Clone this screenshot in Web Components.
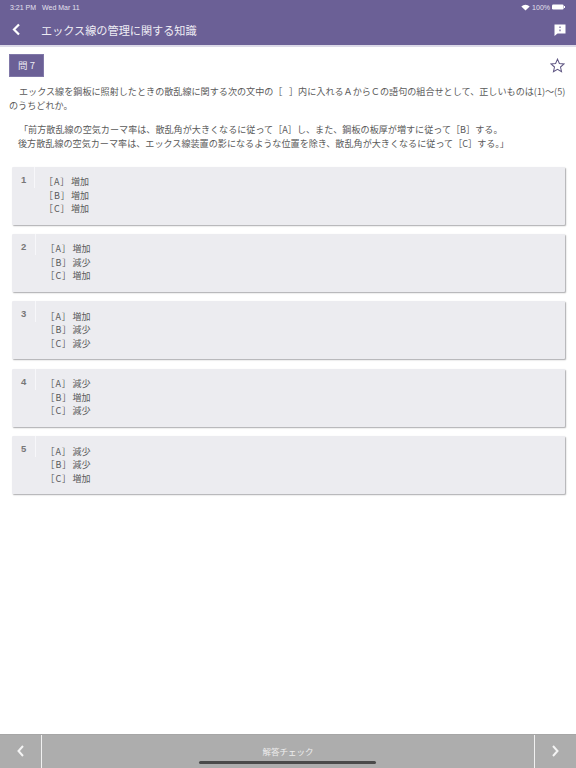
<!DOCTYPE html>
<html lang="ja">
<head>
<meta charset="utf-8">
<title>問7</title>
<style>
    html, body { margin: 0; height: 100%; background: #fff; }
    body { font-family: "Noto Sans CJK JP", "Liberation Sans", sans-serif; }
</style>
</head>
<body>
<quiz-screen>
    <quiz-header slot="header" title="エックス線の管理に関する知識"></quiz-header>
    <quiz-question number="問 7">
        <p class="lead">エックス線を鋼板に照射したときの散乱線に関する次の文中の［&ensp; ］内に入れるＡからＣの語句の組合せとして、正しいものは(1)～(5)のうちどれか。</p>
        <p class="quote">「前方散乱線の空気カーマ率は、散乱角が大きくなるに従って［A］し、また、鋼板の板厚が増すに従って［B］する。<br>後方散乱線の空気カーマ率は、エックス線装置の影になるような位置を除き、散乱角が大きくなるに従って［C］する。」</p>
    </quiz-question>
    <quiz-choice number="1" a="増加" b="増加" c="増加" narrow></quiz-choice>
    <quiz-choice number="2" a="増加" b="減少" c="増加"></quiz-choice>
    <quiz-choice number="3" a="増加" b="減少" c="減少"></quiz-choice>
    <quiz-choice number="4" a="減少" b="増加" c="減少"></quiz-choice>
    <quiz-choice number="5" a="減少" b="減少" c="増加"></quiz-choice>
    <quiz-footer slot="footer" label="解答チェック"></quiz-footer>
</quiz-screen>

<script>
class QuizScreen extends HTMLElement {
    constructor() {
        super();
        this.attachShadow({ mode: 'open' });
        this.shadowRoot.innerHTML = `
        <style>
            :host { display: flex; flex-direction: column; width: 576px; height: 768px; overflow: hidden; background: #fff; }
            main { flex: 1; display: flex; flex-direction: column; gap: 9.4px; padding: 0 11px 0 12px; }
        </style>
        <slot name="header"></slot>
        <main><slot></slot></main>
        <slot name="footer"></slot>`;
    }
}

class QuizHeader extends HTMLElement {
    constructor() {
        super();
        this.attachShadow({ mode: 'open' });
    }
    connectedCallback() {
        this.shadowRoot.innerHTML = `
        <style>
            :host { display: block; height: 47px; box-sizing: border-box; background: #6b6096; border-bottom: 2px solid #dcdae8; color: #fff; }
            .status { height: 14px; display: flex; align-items: center; padding: 0 11px 0 10px; font-size: 7px; color: #e4e1ee; gap: 6px; font-family: "Liberation Sans", sans-serif; }
            .right { margin-left: auto; display: flex; align-items: center; gap: 2px; }
            .bar { display: flex; align-items: center; height: 31px; padding: 0 10px 3px 12px; }
            .title { margin-left: 20px; font-size: 11.15px; color: #eeecf4; }
            .note { margin-left: auto; }
            svg { display: block; }
        </style>
        <div class="status">
            <span>3:21 PM</span><span>Wed Mar 11</span>
            <span class="right">
                <svg width="9" height="7" viewBox="0 0 9 7"><path d="M4.5 6.6 0.3 2.4a6 6 0 0 1 8.4 0z" fill="#fff"/></svg>
                <span>100%</span>
                <svg width="13" height="6" viewBox="0 0 13 6"><rect x="0" y="0.5" width="11.6" height="5" rx="1.2" fill="#fff"/><rect x="12" y="2" width="1" height="2" fill="#fff"/></svg>
            </span>
        </div>
        <div class="bar">
            <svg width="9" height="13" viewBox="0 0 9 13"><path d="M7 1.5 2 6.5l5 5" fill="none" stroke="#fff" stroke-width="2.2"/></svg>
            <span class="title">${this.getAttribute('title')}</span>
            <svg class="note" width="12" height="12" viewBox="0 0 12 12"><path d="M0.5 0.5h11v9h-8l-3 2.5z" fill="#fff"/><path d="M6 2.5v1.6M6 5.6v1.6" stroke="#6b6096" stroke-width="1.2"/></svg>
        </div>`;
    }
}

class QuizQuestion extends HTMLElement {
    constructor() {
        super();
        this.attachShadow({ mode: 'open' });
    }
    connectedCallback() {
        this.shadowRoot.innerHTML = `
        <style>
            :host { display: block; margin: 7px -3px 0 -3px; color: #5a5a5a; font-size: 9.1px; line-height: 13.7px; height: 103.2px; }
            .top { display: flex; justify-content: space-between; align-items: center; margin-bottom: 8px; }
            .tag { width: 35px; height: 23px; box-sizing: border-box; background: #6b6096; color: #eeecf4; display: flex; align-items: center; justify-content: center; font-size: 9.5px; border: 1px solid #8078a8; }
            svg { display: block; margin-right: 3px; }
            ::slotted(p) { margin: 0; }
            ::slotted(.lead) { text-indent: 10px; margin-bottom: 11px; }
            ::slotted(.quote) { padding-left: 9px; text-indent: 1px; }
        </style>
        <div class="top">
            <div class="tag">${this.getAttribute('number')}</div>
            <svg width="15" height="15" viewBox="0 0 16 16"><path d="M8 1.2l2 4.6 5 .5-3.800 3.300 1.100 4.900L8 12l-4.300 2.500 1.100-4.900L1 6.300l5-.5z" fill="none" stroke="#5f5683" stroke-width="1.100"/></svg>
        </div>
        <slot></slot>`;
    }
}

class QuizChoice extends HTMLElement {
    constructor() {
        super();
        this.attachShadow({ mode: 'open' });
    }
    connectedCallback() {
        const rows = ['A', 'B', 'C'].map(k =>
            `<div class="row"><span class="key">［${k}］</span><span>${this.getAttribute(k.toLowerCase())}</span></div>`).join('');
        const numWidth = this.hasAttribute('narrow') ? 22.5 : 24;
        this.shadowRoot.innerHTML = `
        <style>
            :host { display: flex; height: 58px; box-sizing: border-box; background: #ececf0; color: #5a5a5a; font-size: 9px; border-radius: 1px; box-shadow: 1px 1px 1.5px #a9a9ac; }
            .num { flex: none; width: ${numWidth}px; height: 21px; box-sizing: border-box; border-right: 1px solid #f7f7fa; padding: 7px 0 0 9px; font-size: 9.5px; line-height: 12px; font-family: "Liberation Sans", sans-serif; font-weight: bold; color: #777; }
            .rows { padding: 8.5px 0 0 9.5px; line-height: 13.5px; }
            .row { display: flex; }
            .key { flex: none; width: 27px; letter-spacing: 0.9px; }
        </style>
        <div class="num">${this.getAttribute('number')}</div>
        <div class="rows">${rows}</div>`;
    }
}

class QuizFooter extends HTMLElement {
    constructor() {
        super();
        this.attachShadow({ mode: 'open' });
    }
    connectedCallback() {
        this.shadowRoot.innerHTML = `
        <style>
            :host { display: flex; height: 34px; background: #adadad; color: #eee; position: relative; border-top: 1px solid #a6a6a6; box-sizing: border-box; }
            .nav { width: 42px; display: flex; align-items: center; justify-content: center; box-sizing: border-box; padding-bottom: 2px; }
            .nav.prev { border-right: 1px solid #f1f1f1; }
            .nav.next { border-left: 1px solid #f1f1f1; }
            .label { flex: 1; display: flex; align-items: center; justify-content: center; font-size: 8.5px; padding-bottom: 2px; }
            .home { position: absolute; left: 199px; bottom: 4px; width: 177px; height: 3px; border-radius: 2px; background: #4a4a4a; }
            svg { display: block; }
        </style>
        <div class="nav prev"><svg width="9" height="12" viewBox="0 0 9 12"><path d="M7 1 2.500 6 7 11" fill="none" stroke="#f4f4f4" stroke-width="2"/></svg></div>
        <div class="label">${this.getAttribute('label')}</div>
        <div class="nav next"><svg width="9" height="12" viewBox="0 0 9 12"><path d="M2 1l4.500 5L2 11" fill="none" stroke="#f4f4f4" stroke-width="2"/></svg></div>
        <div class="home"></div>`;
    }
}

customElements.define('quiz-screen', QuizScreen);
customElements.define('quiz-header', QuizHeader);
customElements.define('quiz-question', QuizQuestion);
customElements.define('quiz-choice', QuizChoice);
customElements.define('quiz-footer', QuizFooter);
</script>
</body>
</html>
